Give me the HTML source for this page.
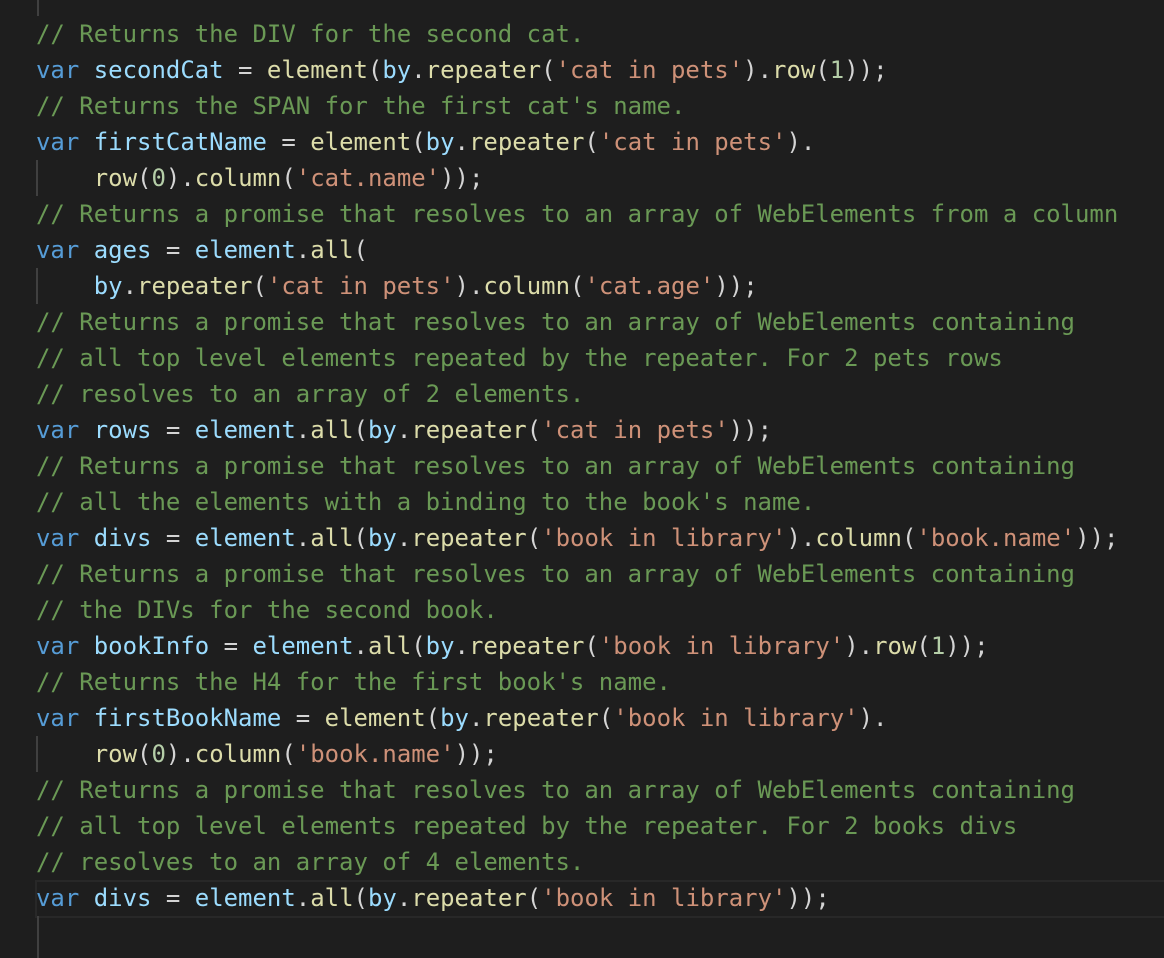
<!DOCTYPE html>
<html><head><meta charset="utf-8"><style>
html,body{margin:0;padding:0;background:#1e1e1e;width:1164px;height:958px;overflow:hidden}
.code{position:absolute;left:36px;top:16px;font-family:"DejaVu Sans Mono","Liberation Mono",monospace;font-size:23.97px;color:#d4d4d4}
.l{height:36px;line-height:36px;position:relative;white-space:pre}
.c{color:#6a9955}.k{color:#569cd6}.v{color:#9cdcfe}.f{color:#dcdcaa}.s{color:#ce9178}.n{color:#b5cea8}
.g{position:absolute;left:0;top:0;width:2px;height:36px;background:#404040}
.cur{position:absolute;left:35px;top:880px;width:1129px;height:34px;border:2px solid #282828;border-right:none}
.gl{position:absolute;left:37px;width:2px;background:#404040}
</style></head><body>
<div class="gl" style="top:0;height:16px"></div>
<div class="cur"></div>
<div class="gl" style="top:916px;height:42px"></div>
<div class="code"><div class="l"><span class="c">// Returns the DIV for the second cat.</span></div><div class="l"><span class="k">var</span> <span class="v">secondCat</span> = <span class="f">element</span>(<span class="v">by</span>.<span class="f">repeater</span>(<span class="s">'cat in pets'</span>).<span class="f">row</span>(<span class="n">1</span>));</div><div class="l"><span class="c">// Returns the SPAN for the first cat's name.</span></div><div class="l"><span class="k">var</span> <span class="v">firstCatName</span> = <span class="f">element</span>(<span class="v">by</span>.<span class="f">repeater</span>(<span class="s">'cat in pets'</span>).</div><div class="l"><span class="g"></span>    <span class="f">row</span>(<span class="n">0</span>).<span class="f">column</span>(<span class="s">'cat.name'</span>));</div><div class="l"><span class="c">// Returns a promise that resolves to an array of WebElements from a column</span></div><div class="l"><span class="k">var</span> <span class="v">ages</span> = <span class="v">element</span>.<span class="f">all</span>(</div><div class="l"><span class="g"></span>    <span class="v">by</span>.<span class="f">repeater</span>(<span class="s">'cat in pets'</span>).<span class="f">column</span>(<span class="s">'cat.age'</span>));</div><div class="l"><span class="c">// Returns a promise that resolves to an array of WebElements containing</span></div><div class="l"><span class="c">// all top level elements repeated by the repeater. For 2 pets rows</span></div><div class="l"><span class="c">// resolves to an array of 2 elements.</span></div><div class="l"><span class="k">var</span> <span class="v">rows</span> = <span class="v">element</span>.<span class="f">all</span>(<span class="v">by</span>.<span class="f">repeater</span>(<span class="s">'cat in pets'</span>));</div><div class="l"><span class="c">// Returns a promise that resolves to an array of WebElements containing</span></div><div class="l"><span class="c">// all the elements with a binding to the book's name.</span></div><div class="l"><span class="k">var</span> <span class="v">divs</span> = <span class="v">element</span>.<span class="f">all</span>(<span class="v">by</span>.<span class="f">repeater</span>(<span class="s">'book in library'</span>).<span class="f">column</span>(<span class="s">'book.name'</span>));</div><div class="l"><span class="c">// Returns a promise that resolves to an array of WebElements containing</span></div><div class="l"><span class="c">// the DIVs for the second book.</span></div><div class="l"><span class="k">var</span> <span class="v">bookInfo</span> = <span class="v">element</span>.<span class="f">all</span>(<span class="v">by</span>.<span class="f">repeater</span>(<span class="s">'book in library'</span>).<span class="f">row</span>(<span class="n">1</span>));</div><div class="l"><span class="c">// Returns the H4 for the first book's name.</span></div><div class="l"><span class="k">var</span> <span class="v">firstBookName</span> = <span class="f">element</span>(<span class="v">by</span>.<span class="f">repeater</span>(<span class="s">'book in library'</span>).</div><div class="l"><span class="g"></span>    <span class="f">row</span>(<span class="n">0</span>).<span class="f">column</span>(<span class="s">'book.name'</span>));</div><div class="l"><span class="c">// Returns a promise that resolves to an array of WebElements containing</span></div><div class="l"><span class="c">// all top level elements repeated by the repeater. For 2 books divs</span></div><div class="l"><span class="c">// resolves to an array of 4 elements.</span></div><div class="l"><span class="k">var</span> <span class="v">divs</span> = <span class="v">element</span>.<span class="f">all</span>(<span class="v">by</span>.<span class="f">repeater</span>(<span class="s">'book in library'</span>));</div></div>
</body></html>
